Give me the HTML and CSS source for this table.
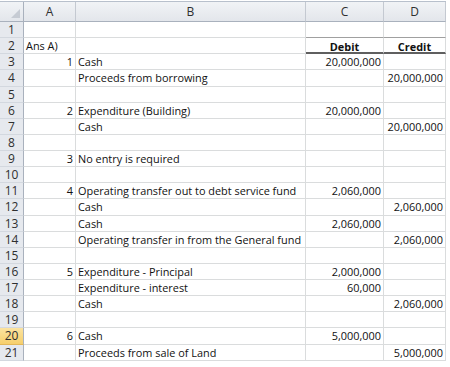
FILE: index.html
```html
<!DOCTYPE html>
<html>
<head>
<meta charset="utf-8">
<link rel="stylesheet" href="styles.css">
</head>
<body>
<div class="sheet">
  <div class="ch corner"><span class="tri"></span></div><div class="ch">A</div><div class="ch">B</div><div class="ch">C</div><div class="ch">D</div>

  <div class="rh">1</div><div class="c"></div><div class="c"></div><div class="c pre"></div><div class="c pre"></div>
  <div class="rh">2</div><div class="c">Ans A)</div><div class="c"></div><div class="c hd">Debit</div><div class="c hd">Credit</div>
  <div class="rh">3</div><div class="c r">1</div><div class="c">Cash</div><div class="c r">20,000,000</div><div class="c"></div>
  <div class="rh">4</div><div class="c"></div><div class="c">Proceeds from borrowing</div><div class="c"></div><div class="c r">20,000,000</div>
  <div class="rh">5</div><div class="c"></div><div class="c"></div><div class="c"></div><div class="c"></div>
  <div class="rh">6</div><div class="c r">2</div><div class="c">Expenditure (Building)</div><div class="c r">20,000,000</div><div class="c"></div>
  <div class="rh">7</div><div class="c"></div><div class="c">Cash</div><div class="c"></div><div class="c r">20,000,000</div>
  <div class="rh">8</div><div class="c"></div><div class="c"></div><div class="c"></div><div class="c"></div>
  <div class="rh">9</div><div class="c r">3</div><div class="c">No entry is required</div><div class="c"></div><div class="c"></div>
  <div class="rh">10</div><div class="c"></div><div class="c"></div><div class="c"></div><div class="c"></div>
  <div class="rh">11</div><div class="c r">4</div><div class="c">Operating transfer out to debt service fund</div><div class="c r">2,060,000</div><div class="c"></div>
  <div class="rh">12</div><div class="c"></div><div class="c">Cash</div><div class="c"></div><div class="c r">2,060,000</div>
  <div class="rh">13</div><div class="c"></div><div class="c">Cash</div><div class="c r">2,060,000</div><div class="c"></div>
  <div class="rh">14</div><div class="c"></div><div class="c">Operating transfer in from the General fund</div><div class="c"></div><div class="c r">2,060,000</div>
  <div class="rh">15</div><div class="c"></div><div class="c"></div><div class="c"></div><div class="c"></div>
  <div class="rh">16</div><div class="c r">5</div><div class="c">Expenditure - Principal</div><div class="c r">2,000,000</div><div class="c"></div>
  <div class="rh">17</div><div class="c"></div><div class="c">Expenditure - interest</div><div class="c r">60,000</div><div class="c"></div>
  <div class="rh">18</div><div class="c"></div><div class="c">Cash</div><div class="c"></div><div class="c r">2,060,000</div>
  <div class="rh">19</div><div class="c"></div><div class="c"></div><div class="c"></div><div class="c"></div>
  <div class="rh sel">20</div><div class="c r">6</div><div class="c">Cash</div><div class="c r">5,000,000</div><div class="c"></div>
  <div class="rh">21</div><div class="c"></div><div class="c">Proceeds from sale of Land</div><div class="c"></div><div class="c r">5,000,000</div>
</div>
</body>
</html>
```
FILE: styles.css
```css
html, body {
  margin: 0;
  padding: 0;
  background: #ffffff;
}
.sheet {
  margin-top: 1px;
  display: grid;
  grid-template-columns: 24px 52px 230px 78px 62px;
  grid-template-rows: 20px;
  grid-auto-rows: 16.14px;
  width: 446px;
  font-family: "Open Sans", "DejaVu Sans", sans-serif;
  font-size: 10.9px;
  color: #111;
  border-top: 1px solid #b8c0cc;
}
.sheet > div {
  box-sizing: border-box;
  white-space: nowrap;
  overflow: visible;
  line-height: 16px;
}
.ch {
  background: linear-gradient(#f1f3f6, #e3e6eb);
  border-right: 1px solid #c4c9d1;
  border-bottom: 1px solid #a9b1bd;
  text-align: center;
  color: #2f2f2f;
  font-size: 12px;
  line-height: 19px !important;
}
.corner {
  position: relative;
  border-right: 1px solid #a9b1bd;
}
.tri {
  position: absolute;
  right: 3px;
  bottom: 3px;
  width: 0;
  height: 0;
  border-left: 9px solid transparent;
  border-bottom: 9px solid #c6cbd3;
}
.rh {
  background: #e6e9ee;
  border-right: 1px solid #a9b1bd;
  border-bottom: 1px solid #d3d8df;
  text-align: center;
  color: #2f2f2f;
  font-size: 12px;
}
.rh.sel {
  background: linear-gradient(#fbe3a0, #f6cf6c);
  border-bottom: 1px solid #e2b75a;
}
.c {
  border-right: 1px solid #dadcdd;
  border-bottom: 1px solid #dadcdd;
  padding: 0 2px;
}
.c.r {
  text-align: right;
}
.c.pre {
  border-bottom: 1px solid #a0a0a0;
}
.c.hd {
  font-weight: bold;
  text-align: center;
  border-bottom: 2px solid #5f5f5f;
  line-height: 17px;
}
```
